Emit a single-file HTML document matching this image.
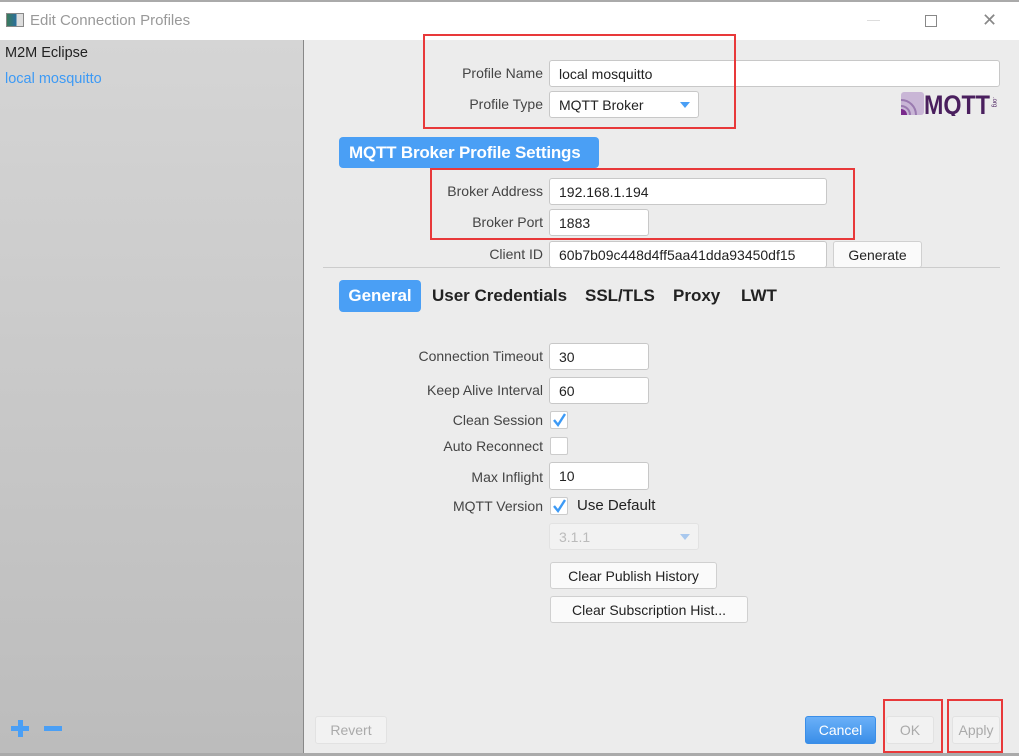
<!DOCTYPE html>
<html><head><meta charset="utf-8"><style>
*{box-sizing:border-box;margin:0;padding:0}
body{width:1019px;height:756px;position:relative;background:#ececec;font-family:"Liberation Sans",sans-serif;font-size:14px;color:#333;overflow:hidden}
.a{position:absolute}
.lbl{position:absolute;right:476px;font-size:14px;color:#444;line-height:18px;white-space:nowrap}
.in{position:absolute;background:#fff;border:1px solid #c8c8c8;border-radius:3px;padding-left:9px;font-size:14px;color:#222;display:flex;align-items:center;white-space:nowrap;overflow:hidden}
.btn{position:absolute;background:#fafafa;border:1px solid #d0d0d0;border-radius:3px;font-size:14px;color:#222;display:flex;align-items:center;justify-content:center;white-space:nowrap}
.red{position:absolute;border:2px solid #e8393a}
.cb{position:absolute;width:18px;height:18px;background:#fff;border:1px solid #ccc;border-radius:2px}
.tab{position:absolute;top:280px;height:32px;font-size:17px;font-weight:bold;color:#222;line-height:32px;white-space:nowrap}
</style></head><body>
<div class="a" style="left:0;top:0;width:1019px;height:40px;background:#fff;border-top:2px solid #aaa"></div>
<div class="a" style="left:6px;top:13px;width:18px;height:14px;border:1px solid #888;background:linear-gradient(90deg,#3a7a5a,#2a6ea0 60%,#ddd 60%)"></div>
<div class="a" style="left:30px;top:12px;font-size:15px;color:#999">Edit Connection Profiles</div>
<div class="a" style="left:867px;top:20px;width:13px;height:1px;background:#ddd"></div>
<div class="a" style="left:925px;top:15px;width:12px;height:12px;border:1px solid #888"></div>
<div class="a" style="left:982px;top:10px;font-size:18px;color:#888">✕</div>
<div class="a" style="left:0;top:40px;width:304px;height:713px;background:linear-gradient(#d5d5d5,#bcbcbc);border-right:1px solid #888"></div>
<div class="a" style="left:5px;top:45px;font-size:14.5px;color:#222">M2M Eclipse</div>
<div class="a" style="left:5px;top:71px;font-size:14.5px;color:#3d9af5">local mosquitto</div>
<div class="a" style="left:11px;top:726px;width:18px;height:5px;background:#4a9ff5"></div>
<div class="a" style="left:17.5px;top:720px;width:5px;height:17px;background:#4a9ff5"></div>
<div class="a" style="left:44px;top:726px;width:18px;height:5px;background:#4a9ff5"></div>
<div class="a" style="left:0;top:753px;width:1019px;height:3px;background:#aaa"></div>

<div class="lbl" style="top:64px">Profile Name</div>
<div class="in" style="left:549px;top:60px;width:451px;height:27px">local mosquitto</div>
<div class="lbl" style="top:95px">Profile Type</div>
<div class="in" style="left:549px;top:91px;width:150px;height:27px">MQTT Broker<span style="position:absolute;right:8px;top:10px;border:5px solid transparent;border-top:6px solid #4a9ff5"></span></div>
<div class="red" style="left:423px;top:34px;width:313px;height:95px"></div>
<svg class="a" style="left:901px;top:92px" width="100" height="24"><rect x="0" y="0" width="23" height="23" rx="3" fill="#c9b6d6"/><path d="M0 8A15 15 0 0 1 15 23" stroke="#9a7ab0" stroke-width="2" fill="none"/><path d="M0 14A9 9 0 0 1 9 23" stroke="#9a7ab0" stroke-width="2" fill="none"/><path d="M0 23V17A6 6 0 0 1 6 23Z" fill="#7a2a8c"/><text x="23" y="22" font-family="Liberation Sans" font-weight="bold" font-size="27" fill="#4a1f5e" textLength="66" lengthAdjust="spacingAndGlyphs">MQTT</text><text x="92" y="5" font-size="6" fill="#4a1f5e" transform="rotate(90 92 5)">.org</text></svg>

<div class="a" style="left:339px;top:137px;width:260px;height:31px;background:#4a9ff5;border-radius:4px;color:#fff;font-size:17px;font-weight:bold;line-height:31px;padding-left:10px;white-space:nowrap;letter-spacing:-0.2px">MQTT Broker Profile Settings</div>
<div class="lbl" style="top:182px">Broker Address</div>
<div class="in" style="left:549px;top:178px;width:278px;height:27px">192.168.1.194</div>
<div class="lbl" style="top:213px">Broker Port</div>
<div class="in" style="left:549px;top:209px;width:100px;height:27px">1883</div>
<div class="red" style="left:430px;top:168px;width:425px;height:72px"></div>
<div class="lbl" style="top:245px">Client ID</div>
<div class="in" style="left:549px;top:241px;width:278px;height:27px">60b7b09c448d4ff5aa41dda93450df15</div>
<div class="btn" style="left:833px;top:241px;width:89px;height:27px">Generate</div>
<div class="a" style="left:323px;top:267px;width:677px;height:1px;background:#ccc"></div>

<div class="a" style="left:339px;top:280px;width:82px;height:32px;background:#4a9ff5;border-radius:4px;color:#fff;font-size:17px;font-weight:bold;line-height:32px;text-align:center">General</div>
<div class="tab" style="left:432px">User Credentials</div>
<div class="tab" style="left:585px">SSL/TLS</div>
<div class="tab" style="left:673px">Proxy</div>
<div class="tab" style="left:741px">LWT</div>

<div class="lbl" style="top:347px">Connection Timeout</div>
<div class="in" style="left:549px;top:343px;width:100px;height:27px">30</div>
<div class="lbl" style="top:381px">Keep Alive Interval</div>
<div class="in" style="left:549px;top:377px;width:100px;height:27px">60</div>
<div class="lbl" style="top:411px">Clean Session</div>
<div class="cb" style="left:550px;top:411px"></div>
<svg class="a" style="left:550px;top:411px" width="18" height="18"><path d="M4 9L8 14L15 3" stroke="#3d9af5" stroke-width="2.4" fill="none"/></svg>
<div class="lbl" style="top:437px">Auto Reconnect</div>
<div class="cb" style="left:550px;top:437px"></div>
<div class="lbl" style="top:468px">Max Inflight</div>
<div class="in" style="left:549px;top:462px;width:100px;height:28px">10</div>
<div class="lbl" style="top:497px">MQTT Version</div>
<div class="cb" style="left:550px;top:497px"></div>
<svg class="a" style="left:550px;top:497px" width="18" height="18"><path d="M4 9L8 14L15 3" stroke="#3d9af5" stroke-width="2.4" fill="none"/></svg>
<div class="a" style="left:577px;top:497px;font-size:15px;color:#222">Use Default</div>
<div class="in" style="left:549px;top:523px;width:150px;height:27px;background:#f2f2f2;border-color:#e2e2e2;color:#bbb">3.1.1<span style="position:absolute;right:8px;top:10px;border:5px solid transparent;border-top:6px solid #a8c8ee"></span></div>
<div class="btn" style="left:550px;top:562px;width:167px;height:27px">Clear Publish History</div>
<div class="btn" style="left:550px;top:596px;width:198px;height:27px">Clear Subscription Hist...</div>

<div class="btn" style="left:315px;top:716px;width:72px;height:28px;color:#aaa;background:#f2f2f2;border-color:#e2e2e2">Revert</div>
<div class="btn" style="left:805px;top:716px;width:71px;height:28px;background:linear-gradient(#6ab0f8,#3a8ee8);border-color:#3a8ee8;color:#fff">Cancel</div>
<div class="btn" style="left:886px;top:716px;width:48px;height:28px;color:#aaa;background:#f2f2f2;border-color:#e2e2e2">OK</div>
<div class="btn" style="left:952px;top:716px;width:48px;height:28px;color:#aaa;background:#f2f2f2;border-color:#e2e2e2">Apply</div>
<div class="red" style="left:883px;top:699px;width:60px;height:54px"></div>
<div class="red" style="left:947px;top:699px;width:56px;height:54px"></div>
</body></html>
